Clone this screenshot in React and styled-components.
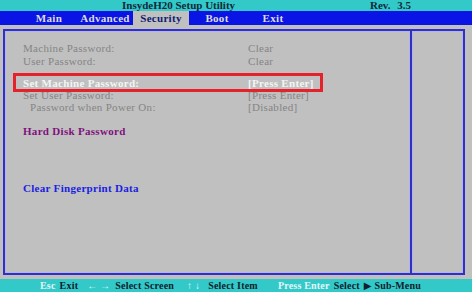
import React from "react";
import styled, { createGlobalStyle } from "styled-components";

const Global = createGlobalStyle`
  html, body { margin: 0; padding: 0; background: #c0c0c0; }
  body { font-family: "Liberation Serif", "DejaVu Serif", serif; }
`;

const Screen = styled.div`
  width: 472px;
  height: 292px;
  display: flex;
  flex-direction: column;
  background: #c0c0c0;
  overflow: hidden;
`;

const Header = styled.div`
  height: 11px;
  background: #33c9c9;
  display: flex;
  align-items: center;
  padding-left: 122px;
  padding-right: 61px;
  font-size: 11px;
  font-weight: bold;
  color: #102838;
  line-height: 11px;
`;

const Rev = styled.span`
  margin-left: auto;
  word-spacing: 4px;
`;

const TabBar = styled.div`
  height: 14px;
  background: #0a14e4;
  display: flex;
  padding-left: 21px;
`;

const Tab = styled.div`
  width: 56px;
  display: flex;
  align-items: center;
  justify-content: center;
  font-size: 11px;
  font-weight: bold;
  letter-spacing: 0.3px;
  color: ${(p) => (p.$active ? "#101a70" : "#dcdcdc")};
  background: ${(p) => (p.$active ? "#c0c0c0" : "transparent")};
`;

const Body = styled.div`
  flex: 1;
  padding: 4px 7px 4px 3px;
  display: flex;
`;

const Frame = styled.div`
  flex: 1;
  display: flex;
  border: 2px solid #3030c4;
  box-shadow: inset 0 0 0 1px #b4b4ea;
`;

const MainPanel = styled.div`
  flex: 1;
  padding: 11px 0 0 18px;
  display: flex;
  flex-direction: column;
`;

const HelpPanel = styled.div`
  width: 51px;
  border-left: 2px solid #3030c4;
  box-shadow: inset 1px 0 0 #b4b4ea, -1px 0 0 #b4b4ea;
`;

const Row = styled.div`
  position: relative;
  height: 12px;
  line-height: 12px;
  display: flex;
  font-size: 11px;
  font-weight: ${(p) => (p.$bold ? "bold" : "normal")};
  color: ${(p) => p.$color || "#858585"};
  margin-top: ${(p) => p.$gap || 0}px;
  white-space: nowrap;
`;

const Label = styled.span`
  width: 225px;
  padding-left: ${(p) => (p.$indent ? 7 : 0)}px;
  box-sizing: border-box;
  letter-spacing: 0.3px;
`;

const Value = styled.span`
  letter-spacing: 0.3px;
`;

const Highlight = styled.span`
  position: absolute;
  left: -10px;
  top: -4px;
  width: 310px;
  height: 19px;
  border: 3px solid #e5222c;
  box-sizing: border-box;
`;

const Footer = styled.div`
  height: 13px;
  background: #33c9c9;
  display: flex;
  align-items: center;
  padding-left: 40px;
  font-size: 10px;
  font-weight: bold;
  letter-spacing: 0.2px;
  line-height: 13px;
  white-space: nowrap;
`;

const Key = styled.span`
  color: ${(p) => (p.$light ? "#e6f6f6" : "#10202c")};
  margin-right: ${(p) => p.$mr || 0}px;
`;

export default function App() {
  return (
    <Screen>
      <Global />
      <Header>
        <span>InsydeH20 Setup Utility</span>
        <Rev>Rev. 3.5</Rev>
      </Header>
      <TabBar>
        <Tab>Main</Tab>
        <Tab>Advanced</Tab>
        <Tab $active>Security</Tab>
        <Tab>Boot</Tab>
        <Tab>Exit</Tab>
      </TabBar>
      <Body>
        <Frame>
          <MainPanel>
            <Row>
              <Label>Machine Password:</Label>
              <Value>Clear</Value>
            </Row>
            <Row $gap={1}>
              <Label>User Password:</Label>
              <Value>Clear</Value>
            </Row>
            <Row $gap={10} $bold $color="#f4f4f4">
              <Highlight />
              <Label>Set Machine Password:</Label>
              <Value>[Press Enter]</Value>
            </Row>
            <Row>
              <Label>Set User Password:</Label>
              <Value>[Press Enter]</Value>
            </Row>
            <Row>
              <Label $indent>Password when Power On:</Label>
              <Value>[Disabled]</Value>
            </Row>
            <Row $gap={12} $bold $color="#80107e">
              <Label>Hard Disk Password</Label>
            </Row>
            <Row $gap={45} $bold $color="#1a22e0">
              <Label>Clear Fingerprint Data</Label>
            </Row>
          </MainPanel>
          <HelpPanel />
        </Frame>
      </Body>
      <Footer>
        <Key $light $mr={4}>Esc</Key>
        <Key $mr={9}>Exit</Key>
        <Key $light $mr={5}>← →</Key>
        <Key $mr={13}>Select Screen</Key>
        <Key $light $mr={8}>↑ ↓</Key>
        <Key $mr={20}>Select Item</Key>
        <Key $light $mr={4}>Press Enter</Key>
        <Key $mr={4}>Select</Key>
        <Key>▶ Sub-Menu</Key>
      </Footer>
    </Screen>
  );
}
